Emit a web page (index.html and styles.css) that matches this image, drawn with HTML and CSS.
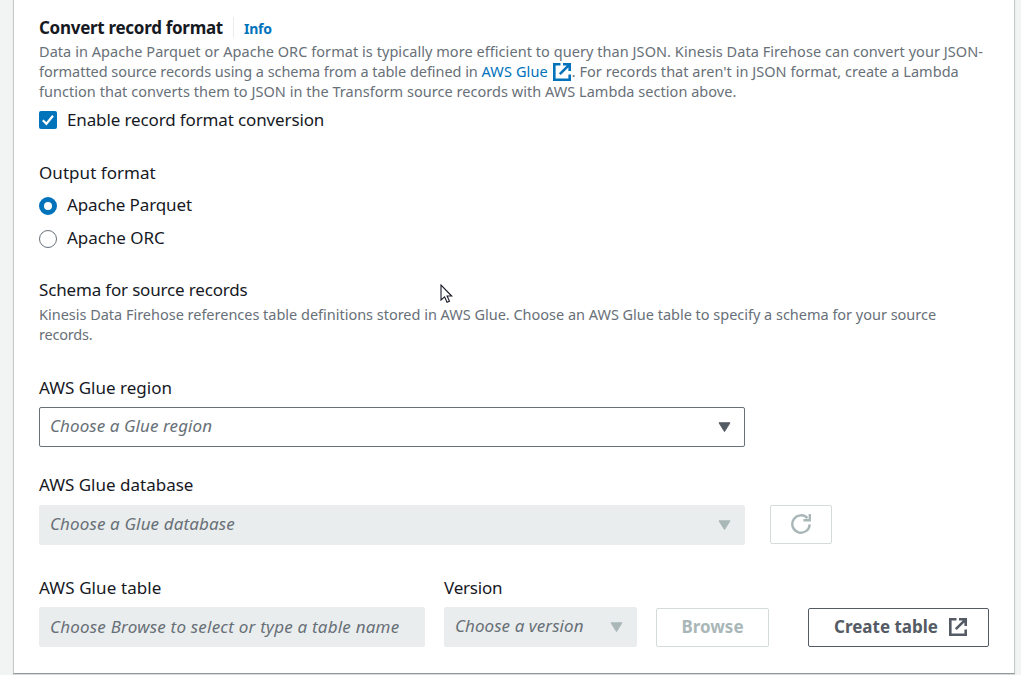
FILE: index.html
```html
<!DOCTYPE html>
<html lang="en">
<head>
<meta charset="utf-8">
<title>Convert record format</title>
<link rel="stylesheet" href="styles.css">
</head>
<body>
<svg class="defs" aria-hidden="true">
  <symbol id="external" viewBox="0 0 18 18">
    <path d="M7.5 1.3H1.3V16.7H16.7V11.5M10 1.3H16.7V8M16.2 1.8L6.8 11.2" fill="none" stroke="currentColor" stroke-width="2.6"/>
  </symbol>
</svg>
<main class="panel">
  <header class="heading">
    <h2 class="title">Convert record format</h2>
    <a class="info">Info</a>
  </header>
  <p class="desc">
    <span class="line l1">Data in Apache Parquet or Apache ORC format is typically more efficient to query than JSON. Kinesis Data Firehose can convert your JSON-</span>
    <span class="line l2"><span class="before">formatted source records using a schema from a table defined in </span><a class="link">AWS Glue</a><svg class="ext"><use href="#external"/></svg><span class="after">. For records that aren't in JSON format, create a Lambda</span></span>
    <span class="line l3">function that converts them to JSON in the Transform source records with AWS Lambda section above.</span>
  </p>
  <label class="option check"><span class="box"><svg viewBox="0 0 18 18"><path d="M3.8 9.2L7.4 12.8L14 4.8" fill="none" stroke="#fff" stroke-width="2.2"/></svg></span>Enable record format conversion</label>
  <h3 class="label output">Output format</h3>
  <label class="option r1"><span class="radio on"></span>Apache Parquet</label>
  <label class="option r2"><span class="radio"></span>Apache ORC</label>
  <h3 class="label schema">Schema for source records</h3>
  <p class="desc">
    <span class="line l4">Kinesis Data Firehose references table definitions stored in AWS Glue. Choose an AWS Glue table to specify a schema for your source</span>
    <span class="line l5">records.</span>
  </p>
  <h3 class="label region">AWS Glue region</h3>
  <div class="field select wide region-select">Choose a Glue region<svg class="caret" viewBox="0 0 13 11"><path d="M1 .8H12L6.5 9.6Z" fill="currentColor" stroke="currentColor" stroke-linejoin="round"/></svg></div>
  <h3 class="label database">AWS Glue database</h3>
  <div class="row">
    <div class="field select wide database-select disabled">Choose a Glue database<svg class="caret" viewBox="0 0 13 11"><path d="M1 .8H12L6.5 9.6Z" fill="currentColor" stroke="currentColor" stroke-linejoin="round"/></svg></div>
    <button class="button refresh" aria-label="Refresh"><svg viewBox="0 0 20 20"><path d="M18.7 10.4A8.7 8.7 0 1 1 16.4 4.1M18.8 0V6.2H12.4" fill="none" stroke="currentColor" stroke-width="2.4"/></svg></button>
  </div>
  <div class="row table-row">
    <div class="group"><h3 class="label tab">AWS Glue table</h3><div class="field table-name disabled">Choose Browse to select or type a table name</div></div>
    <div class="group"><h3 class="label ver">Version</h3><div class="field select version disabled">Choose a version<svg class="caret" viewBox="0 0 13 11"><path d="M1 .8H12L6.5 9.6Z" fill="currentColor" stroke="currentColor" stroke-linejoin="round"/></svg></div></div>
    <button class="button browse">Browse</button>
    <button class="button create">Create table<svg class="ext"><use href="#external"/></svg></button>
  </div>
</main>
<svg class="cursor" viewBox="0 0 13 20"><path d="M1 1V16L4.6 12.8L7 18.3L9.5 17.2L7.1 12H11.7Z" fill="#fff" stroke="#1b1b2b" stroke-width="1.1"/></svg>
</body>
</html>
```
FILE: styles.css
```css
* { box-sizing: border-box; }
body { margin: 0; height: 675px; overflow: hidden; background: #f2f3f3; color: #16191f; font: 17px/22px "Noto Sans", sans-serif; padding: 0 6px 0 13px; }
h2, h3, p { margin: 0; font-weight: 400; font-size: inherit; white-space: nowrap; }
.defs { display: none; }
.panel { height: 674px; background: #fff; border: 1px solid #c5caca; border-top: 0; border-bottom-color: #929a9b; box-shadow: 0 1px 1px #d5dbdb; padding: 15px 25px 0; }
.heading { display: flex; height: 26px; }
.title { font-size: 17px; font-weight: 700; line-height: 26px; letter-spacing: -.29px; }
.info { margin-left: 10px; margin-top: 2px; padding-left: 10px; border-left: 1px solid #eaeded; height: 21px; font-size: 14px; font-weight: 700; color: #0073bb; line-height: 24px; letter-spacing: -.2px; }
.desc { font-size: 14.5px; line-height: 20px; color: #687078; }
.line { display: block; height: 20px; white-space: nowrap; }
.l1 { letter-spacing: .055px; }
.before { letter-spacing: -.047px; }
.after { letter-spacing: .03px; }
.l3 { letter-spacing: .035px; }
.l4 { letter-spacing: -.015px; }
.l5 { letter-spacing: -.2px; }
.link { color: #0073bb; letter-spacing: .12px; }
.ext { width: 18px; height: 18px; flex: none; }
.desc .ext { color: #0073bb; vertical-align: -4px; margin-left: 5px; margin-right: 1px; }
.option { display: flex; align-items: center; height: 22px; gap: 10px; white-space: nowrap; letter-spacing: -.13px; }
.check { margin-top: 8px; }
.box { width: 18px; height: 18px; border-radius: 2px; background: #0073bb; display: flex; }
.radio { width: 18px; height: 18px; border-radius: 50%; border: 1px solid #687078; margin-top: 1px; }
.radio.on { border: 5.5px solid #0073bb; }
.output { margin-top: 31px; letter-spacing: .05px; }
.r1 { margin-top: 10px; }
.r2 { margin-top: 11px; letter-spacing: -.05px; }
.schema { margin-top: 30px; margin-bottom: 3px; letter-spacing: -.17px; }
.region { margin-top: 33px; }
.field { display: flex; align-items: center; justify-content: space-between; height: 40px; border: 1px solid #687078; border-radius: 2px; padding: 0 13px 2px 10px; font-style: italic; color: #687078; white-space: nowrap; }
.wide { width: 706px; }
.region-select { margin-top: 8px; letter-spacing: .08px; }
.database-select { letter-spacing: .13px; }
.disabled { background: #eaeded; border-color: #eaeded; }
.caret { width: 13px; height: 11px; color: #545b64; margin-top: 2px; }
.disabled .caret { color: #aab7b8; }
.database { margin-top: 27px; margin-bottom: 9px; }
.row { display: flex; }
.button { height: 39px; border: 1px solid #d5dbdb; border-radius: 2px; background: #fff; color: #aab7b8; padding: 0 0 2px; display: flex; align-items: center; justify-content: center; font: 700 17px/22px "Noto Sans", sans-serif; white-space: nowrap; }
.refresh { width: 62px; margin-left: 25px; }
.refresh svg { width: 20px; height: 20px; }
.table-row { margin-top: 32px; align-items: flex-end; }
.tab { letter-spacing: .1px; }
.ver { letter-spacing: -.2px; }
.group .field { margin-top: 8px; }
.table-name { width: 386px; padding-bottom: 0; letter-spacing: .21px; }
.version { width: 193px; letter-spacing: .06px; }
.group + .group { margin-left: 19px; }
.browse { width: 113px; margin-left: 19px; }
.create { width: 181px; margin-left: 39px; padding-left: 4px; gap: 11px; border-color: #545b64; color: #545b64; }
.cursor { position: absolute; left: 440px; top: 284px; width: 13px; height: 20px; }
```
